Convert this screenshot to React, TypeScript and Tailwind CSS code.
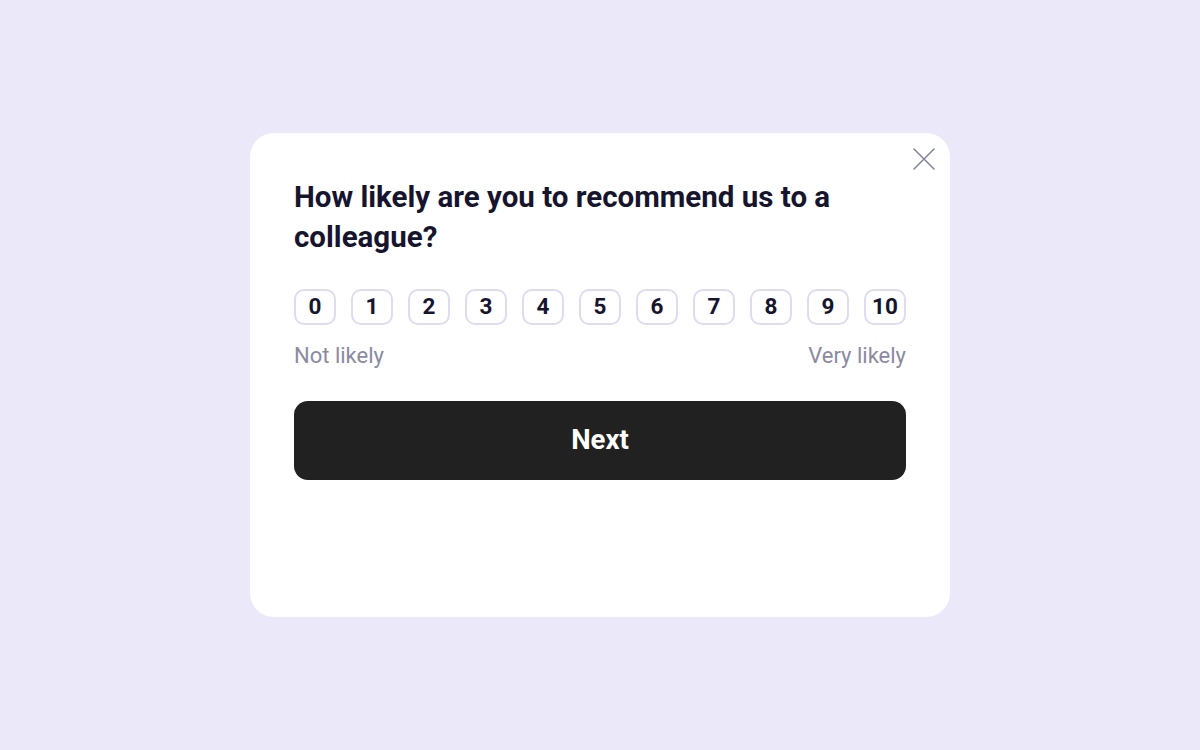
import React from "react";

export default function App() {
  const nums = Array.from({ length: 11 }, (_, i) => i);
  return (
    <div
      className="w-full h-[750px] bg-[#ebe8f9] flex items-center justify-center"
      style={{ fontFamily: "Roboto, 'Liberation Sans', sans-serif" }}
    >
      <div className="relative w-[700px] h-[484px] -mt-[1px] bg-white rounded-[24px] px-[44px] pt-[44px]">
        <button className="absolute right-[14px] top-[14px] w-[24px] h-[24px] flex items-center justify-center text-[#7d8498]">
          <svg width="24" height="24" viewBox="0 0 24 24" fill="none" stroke="currentColor" strokeWidth="1.5" strokeLinecap="round">
            <path d="M2 2 L22 22 M22 2 L2 22" />
          </svg>
        </button>
        <h1 className="text-[29.5px] leading-[40px] font-bold text-[#17152e] pr-[40px]">
          How likely are you to recommend us to a colleague?
        </h1>
        <div className="mt-[32px] flex justify-between">
          {nums.map((n) => (
            <div
              key={n}
              className="w-[42px] h-[36px] border-2 border-[#dedcf1] rounded-[10px] flex items-center justify-center text-[22.5px] font-bold text-[#17152e]"
            >
              {n}
            </div>
          ))}
        </div>
        <div className="mt-[17px] flex justify-between text-[22px] leading-[28px] text-[#8b8a9f]">
          <span>Not likely</span>
          <span>Very likely</span>
        </div>
        <button className="mt-[31px] w-full h-[79px] bg-[#212121] rounded-[14px] text-white text-[27.5px] font-bold">
          Next
        </button>
      </div>
    </div>
  );
}
